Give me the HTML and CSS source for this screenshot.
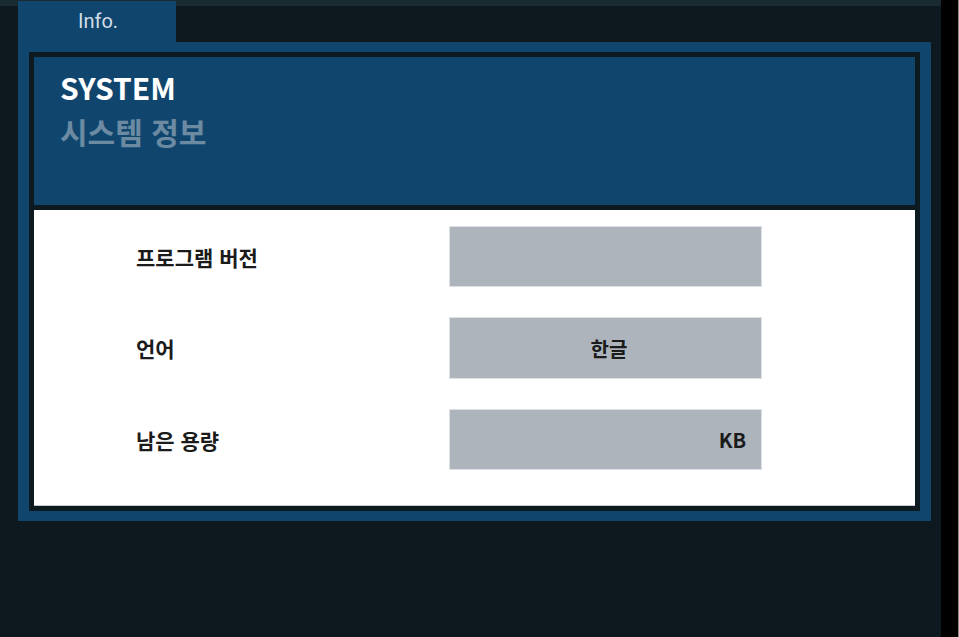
FILE: index.html
```html
<!DOCTYPE html>
<html lang="ko">
<head>
<meta charset="utf-8">
<title>Info</title>
<link rel="stylesheet" href="styles.css">
</head>
<body>
<div class="screen">
  <main class="main">
    <div class="tab">Info.</div>
    <section class="frame">
      <div class="panel">
        <header class="head">
          <div class="title">SYSTEM</div>
          <div class="subtitle">시스템 정보</div>
        </header>
        <div class="body">
          <div class="label">프로그램 버전</div>
          <div class="value"></div>
          <div class="label">언어</div>
          <div class="value center">한글</div>
          <div class="label">남은 용량</div>
          <div class="value right">KB</div>
        </div>
      </div>
    </section>
  </main>
  <aside class="side"></aside>
</div>
</body>
</html>
```

FILE: styles.css
```css
html, body {
  margin: 0;
  padding: 0;
  background: #000;
}
.screen {
  display: flex;
  width: 959px;
  height: 637px;
  font-family: "Noto Sans CJK KR", "Noto Sans", sans-serif;
}
.main {
  width: 941px;
  height: 637px;
  background: linear-gradient(#1a2a31 0 6px, #0d191e 6px);
  padding-top: 1px;
  box-sizing: border-box;
}
.side {
  width: 17px;
  height: 637px;
  background: #000;
  border-right: 1px solid #8a8a8a;
}
.tab {
  margin-left: 18px;
  width: 158px;
  height: 41px;
  background: #10466e;
  color: #d3dee6;
  font-family: "Roboto", "Liberation Sans", sans-serif;
  font-size: 20px;
  line-height: 41px;
  text-align: center;
  padding-left: 2px;
  box-sizing: border-box;
}
.frame {
  margin-left: 18px;
  width: 913px;
  padding: 10px 11px 10px 11px;
  box-sizing: border-box;
  background: #10466e;
}
.panel {
  border: 5px solid #0d1a20;
  background: #0d1a20;
}
.head {
  height: 148px;
  box-sizing: border-box;
  background: #10466e;
  padding: 12px 0 0 26px;
  font-weight: 700;
  font-size: 30px;
  line-height: 36px;
}
.title {
  color: #ffffff;
}
.subtitle {
  color: #6c8ba3;
  margin-top: 8px;
}
.body {
  margin-top: 5px;
  height: 296px;
  box-sizing: border-box;
  background: #fff;
  border-bottom: 1px solid #c9c9c9;
  padding: 16px 0 0 102px;
  display: grid;
  grid-template-columns: 313px 313px;
  grid-template-rows: 61px 62px 61px;
  row-gap: 30px;
  align-items: center;
}
.label {
  font-size: 21px;
  font-weight: 700;
  color: #1b1b1b;
}
.value {
  height: 100%;
  box-sizing: border-box;
  background: #adb4bc;
  border: 1px solid #dde1e5;
  display: flex;
  align-items: center;
  padding: 0 15px;
  font-size: 20px;
  font-weight: 700;
  color: #1b1b1b;
}
.value.center {
  justify-content: center;
  padding-left: 22px;
}
.value.right {
  justify-content: flex-end;
}
```
